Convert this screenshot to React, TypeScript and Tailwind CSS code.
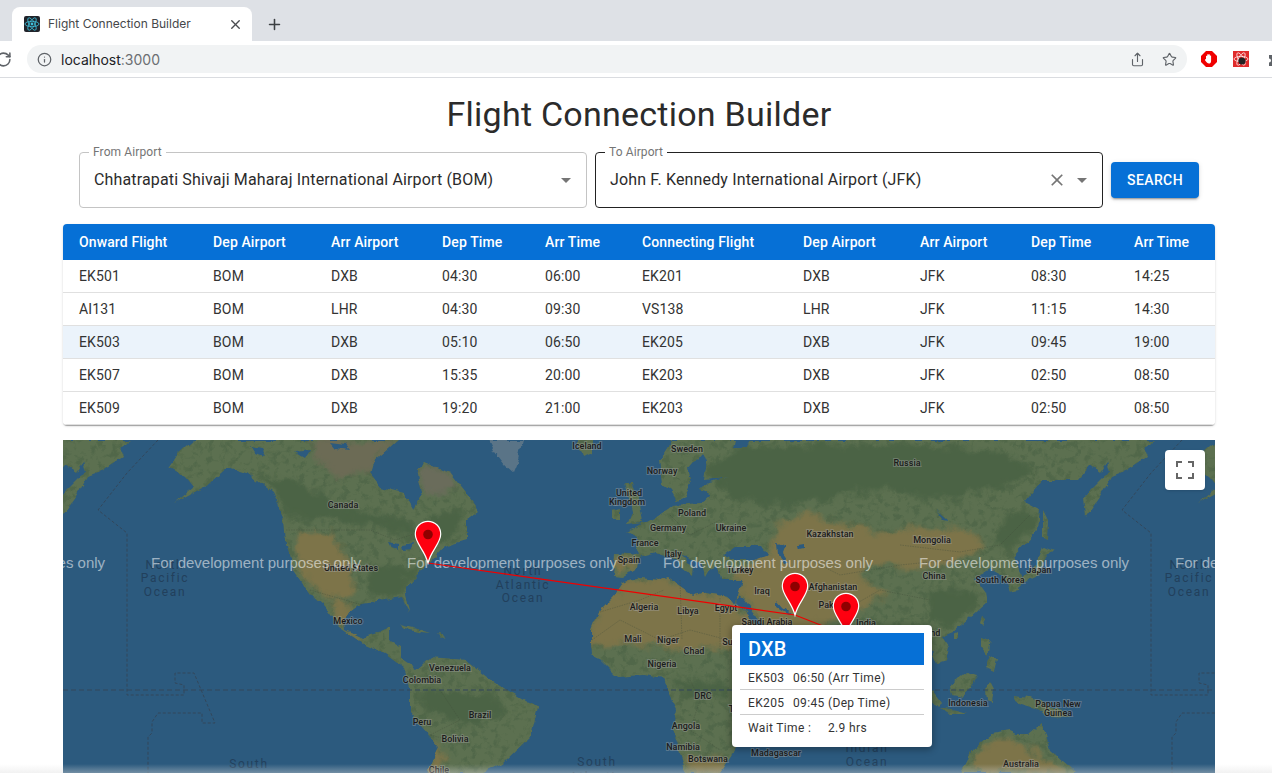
import React from "react";
import { RotateCw, Info, Share, Star, Plus, X } from "lucide-react";

const BLUE = "#0670d6";

const NA =
  "M169 467L179 453L194 440L397 440L374 460L370 473L381 487L404 493L414 510L422 497L416 470L424 462L450 473L466 493L479 510L466 520L466 540L443 547L429 563L404 590L410 613L402 597L385 600L362 603L343 617L345 630L362 638L378 633L389 628L389 640L401 647L401 660L416 670L431 657L466 660L496 683L538 707L531 737L504 763L481 773L427 773L439 747L410 713L410 687L404 667L385 653L362 643L339 627L324 607L309 593L293 570L286 543L284 520L272 493L247 473L228 467L205 487L175 503L194 487L186 477Z";

const EURASIA =
  "M673 440L660 460L663 483L672 490L678 500L685 497L691 483L688 470L703 452L707 462L704 480L730 477L708 482L700 490L710 494L700 503L673 505L667 510L647 522L640 525L627 533L637 538L640 555L615 553L613 577L623 578L635 570L640 557L655 553L670 557L692 575L693 568L680 555L700 563L705 577L710 568L717 565L720 580L742 580L738 597L737 603L727 597L700 592L693 595L667 577L660 580L640 578L623 583L613 597L600 610L592 630L592 643L593 653L617 677L643 675L663 678L667 690L677 710L673 733L683 763L687 773L720 773L732 755L745 735L900 700L932 650L937 663L947 660L950 647L943 637L953 633L987 603L985 592L975 578L990 568L1003 575L1010 592L1020 590L1022 575L1013 557L1038 530L1040 510L1025 502L1043 480L1077 480L1090 465L1100 472L1107 462L1110 473L1103 477L1083 497L1085 518L1100 497L1112 476L1127 470L1147 457L1143 447L1155 440Z";

const DESERT = [
  "M600 610L623 583L640 578L660 580L667 577L693 595L700 592L727 597L737 603L770 640L770 652L730 652L700 648L660 648L620 642L593 646L592 630Z",
  "M774 527L808 513L854 527L885 533L908 527L969 530L984 547L954 563L916 570L877 563L858 573L885 597L831 623L793 617L743 597L736 573L755 563L774 553Z",
  "M745 600L772 640L830 625L793 614L775 600L755 590Z",
  "M296 533L333 533L352 570L352 595L336 597L312 588L294 553Z",
  "M343 617L345 600L330 600L339 627Z",
  "M686 756L727 760L727 773L692 773Z",
  "M432 740L445 750L440 773L428 773Z",
  "M968 773L978 752L993 740L1010 740L1030 748L1048 758L1066 773Z",
  "M614 560L638 558L632 572L616 576Z",
];

const FOREST = [
  "M705 470L740 447L900 443L1000 452L1035 470L1000 488L940 500L880 488L820 500L770 505L730 497Z",
  "M255 473L300 483L350 510L408 520L418 538L380 528L330 518L288 518L273 492Z",
  "M420 693L488 690L508 713L462 727L420 707Z",
  "M670 680L724 682L727 695L686 698Z",
  "M928 592L976 592L980 603L950 628L928 624Z",
  "M370 566L420 568L402 588L395 598L370 598Z",
  "M428 512L462 512L460 534L440 544L428 538Z",
  "M1006 512L1035 514L1033 530L1010 550L994 546Z",
];

const LANDS = [
  "M625 483L633 483L640 505L643 523L627 525L633 510Z",
  "M612 510L620 508L620 518L612 518Z",
  "M578 440L592 440L592 452L584 456L578 452Z",
  "M400 624L417 628L432 633L422 632L405 628Z",
  "M436 634L446 636L440 638Z",
  "M1043 510L1048 520L1047 540L1043 538Z",
  "M1043 547L1052 551L1045 558L1040 575L1025 582L1012 592L1010 585L1025 575L1036 565Z",
  "M982 615L986 618L983 625L980 622Z",
  "M982 637L990 640L987 655L982 648Z",
  "M990 655L998 660L995 672L986 668Z",
  "M950 685L967 672L977 675L972 688L962 697L952 695Z",
  "M932 690L942 703L938 707L930 698Z",
  "M940 708L956 711L967 714L950 714Z",
  "M985 690L990 682L994 690L992 702L986 700Z",
  "M1013 695L1030 697L1050 705L1070 718L1050 717L1035 708L1018 703Z",
  "M954 634L958 632L958 638L954 638Z",
];

const AUSTRALIA = "M961 773L973 750L993 733L1010 730L1017 733L1030 733L1042 723L1050 750L1070 767L1076 773Z";

const WATERS = [
  "M723 555L735 546L762 546L768 555L755 560L735 560Z",
  "M777 542L785 545L782 553L788 562L783 565L778 555Z",
  "M777 600L783 607L793 615L787 613L777 607Z",
  "M738 597L743 600L772 638L769 640L739 605Z",
  "M798 545L804 544L804 548L799 549Z",
  "M736 440L750 440L745 448L734 448Z",
  "M936 511L941 515L948 521L943 520Z",
  "M389 542L398 544L398 551L392 548Z",
  "M402 545L414 543L412 549L403 550Z",
  "M330 442L345 444L350 450L335 448Z",
  "M295 452L310 450L305 458Z",
  "M250 447L262 449L266 456L254 453Z",
];

const BORDERS = [
  "M286 530L370 530L395 540L420 532L432 525",
  "M310 590L345 600L362 605",
  "M592 640L620 620L660 640L690 630L728 640",
  "M600 612L640 600L664 590",
  "M680 580L682 640M720 598L720 650",
  "M670 515L690 535L720 520L730 540",
  "M810 560L840 575L900 565L950 560",
  "M900 545L960 552L1000 545L1030 515",
  "M690 680L700 700L690 730L720 750",
  "M440 690L460 720L430 735L470 745",
  "M845 610L880 590L930 600",
];

const LABELS: [string, number, number][] = [
  ["Iceland", 587, 445], ["Sweden", 687, 448], ["Norway", 662, 470], ["Russia", 907, 462],
  ["United", 629, 492], ["Kingdom", 627, 501], ["Canada", 343, 504], ["Germany", 668, 527],
  ["Poland", 692, 512], ["Ukraine", 731, 527], ["Kazakhstan", 830, 533], ["Mongolia", 932, 539],
  ["France", 645, 542], ["Spain", 629, 559], ["Italy", 673, 553], ["Turkey", 740, 569],
  ["Iraq", 762, 590], ["Afghanistan", 833, 586], ["Pakistan", 836, 604], ["India", 866, 622],
  ["China", 934, 575], ["South Korea", 1000, 579], ["Japan", 1039, 569], ["United States", 351, 567],
  ["Mexico", 348, 620], ["Venezuela", 450, 667], ["Colombia", 422, 679], ["Brazil", 480, 714],
  ["Peru", 422, 721], ["Bolivia", 455, 738], ["Chile", 439, 769], ["Algeria", 644, 606],
  ["Libya", 688, 610], ["Egypt", 726, 607], ["Saudi Arabia", 767, 621], ["Mali", 633, 638],
  ["Niger", 668, 639], ["Chad", 694, 650], ["Sudan", 735, 641], ["Nigeria", 662, 663],
  ["DRC", 703, 695], ["Tanzania", 747, 708], ["Angola", 686, 725], ["Namibia", 683, 746],
  ["Botswana", 708, 758], ["Madagascar", 776, 752], ["Thailand", 923, 632], ["Indonesia", 968, 702],
  ["Papua New", 1058, 703], ["Guinea", 1058, 712], ["Australia", 1021, 763],
];

const OCEANS: [string, number, number][] = [
  ["North", 165, 565], ["Pacific", 165, 578], ["Ocean", 165, 592],
  ["North", 1189, 565], ["Pacific", 1189, 578], ["Ocean", 1189, 592],
  ["North", 523, 571], ["Atlantic", 523, 585], ["Ocean", 523, 598],
  ["South", 249, 764], ["Pacific", 249, 779], ["South", 597, 762], ["Atlantic", 597, 777],
  ["Indian", 867, 748], ["Ocean", 867, 762],
];

const HEAD = ["Onward Flight", "Dep Airport", "Arr Airport", "Dep Time", "Arr Time", "Connecting Flight", "Dep Airport", "Arr Airport", "Dep Time", "Arr Time"];
const ROWS = [
  ["EK501", "BOM", "DXB", "04:30", "06:00", "EK201", "DXB", "JFK", "08:30", "14:25"],
  ["AI131", "BOM", "LHR", "04:30", "09:30", "VS138", "LHR", "JFK", "11:15", "14:30"],
  ["EK503", "BOM", "DXB", "05:10", "06:50", "EK205", "DXB", "JFK", "09:45", "19:00"],
  ["EK507", "BOM", "DXB", "15:35", "20:00", "EK203", "DXB", "JFK", "02:50", "08:50"],
  ["EK509", "BOM", "DXB", "19:20", "21:00", "EK203", "DXB", "JFK", "02:50", "08:50"],
];

function Caret() {
  return (
    <svg width="24" height="24" viewBox="0 0 24 24" className="shrink-0 text-[#757575]" fill="currentColor">
      <path d="M7 10l5 5 5-5z" />
    </svg>
  );
}

function Field({ label, value, focused, clear }: { label: string; value: string; focused?: boolean; clear?: boolean }) {
  return (
    <div className={`relative flex h-14 w-[508px] items-center rounded border pl-[14px] pr-[8px] ${focused ? "border-[#222222]" : "border-[#c4c4c4]"}`}>
      <span className="absolute left-[9px] top-[-8px] bg-white px-[4px] text-[12px] leading-[15px] tracking-[0.1px] text-[#757575]">{label}</span>
      <span className="flex-1 truncate text-[16px] tracking-[0.15px] text-[#2b2b2b]">{value}</span>
      {clear && (
        <svg width="20" height="20" viewBox="0 0 24 24" fill="#757575" className="mr-[3px] shrink-0">
          <path d="M19 6.41L17.59 5 12 10.59 6.41 5 5 6.41 10.59 12 5 17.59 6.41 19 12 13.41 17.59 19 19 17.59 13.41 12z" />
        </svg>
      )}
      <Caret />
    </div>
  );
}

function Pin({ x, y }: { x: number; y: number }) {
  return (
    <g transform={`translate(${x - 13.5} ${y - 42.5})`}>
      <path d="M13.5 .8C6.2.8.8 6.4.8 13.6C.8 23 10 29 13.5 42.5C17 29 26.2 23 26.2 13.6C26.2 6.4 20.8.8 13.5.8Z" fill="#fe0010" stroke="#ffffff" strokeWidth="1.2" />
      <circle cx="13.5" cy="14" r="4.8" fill="#8f0000" />
    </g>
  );
}

function WorldMap() {
  return (
    <svg viewBox="63 440 1152 333" width="1152" height="333" className="block">
      <defs>
        <filter id="rough" x="-5%" y="-5%" width="110%" height="110%" colorInterpolationFilters="sRGB">
          <feTurbulence type="fractalNoise" baseFrequency=".085" numOctaves="3" seed="4" result="n" />
          <feDisplacementMap in="SourceGraphic" in2="n" scale="7" xChannelSelector="R" yChannelSelector="G" />
          <feGaussianBlur stdDeviation=".35" />
        </filter>
        <filter id="biome" x="-10%" y="-10%" width="120%" height="120%" colorInterpolationFilters="sRGB">
          <feGaussianBlur stdDeviation="2.5" result="b" />
          <feTurbulence type="fractalNoise" baseFrequency=".06" numOctaves="3" seed="9" result="n" />
          <feDisplacementMap in="b" in2="n" scale="16" xChannelSelector="R" yChannelSelector="G" />
        </filter>
        <filter id="mottle" x="0" y="0" width="100%" height="100%" colorInterpolationFilters="sRGB">
          <feTurbulence type="fractalNoise" baseFrequency=".14" numOctaves="3" seed="2" />
          <feColorMatrix type="matrix" values="0 0 0 0 .27  0 0 0 0 .37  0 0 0 0 .26  5 0 0 0 -2.5" />
        </filter>
        <clipPath id="land">
          <path d={NA} />
          <path d={EURASIA} />
          <path d={AUSTRALIA} />
          {LANDS.map((d, i) => <path key={i} d={d} />)}
        </clipPath>
      </defs>
      <rect x="63" y="440" width="1152" height="333" fill="#2c5a7e" />
      <g id="world">
        <g filter="url(#rough)">
          <path d="M489 440L523 440L518 460L513 472L505 465L495 452Z" fill="#5a7487" />
          <g clipPath="url(#land)">
            <rect x="60" y="440" width="1160" height="333" fill="#5c7050" />
            <rect x="60" y="440" width="1160" height="333" filter="url(#mottle)" opacity=".45" />
            <g filter="url(#biome)">
              <path d="M310 440L397 440L374 460L370 473L340 478L320 465Z" fill="#6c6b55" />
              <path d="M416 476L424 462L450 473L460 490L430 495Z" fill="#6a6c5b" />
              {FOREST.map((d, i) => <path key={i} d={d} fill="#4b6345" />)}
              {DESERT.map((d, i) => <path key={i} d={d} fill="#7d7449" />)}
              <path d="M345 600L340 628L362 638L352 610Z" fill="#7d7449" />
            </g>
          </g>
          {WATERS.map((d, i) => <path key={i} d={d} fill="#2c5a7e" />)}
        </g>
        {BORDERS.map((d, i) => <path key={i} d={d} fill="none" stroke="#3f4a3a" strokeWidth=".5" strokeDasharray="1.5 1" opacity=".7" />)}
        <path d="M158 440L127 473L98 510L127 533L127 695L184 695L184 685L175 683L175 673L194 673L215 723L202 723L202 713L158 713L152 722L152 733L148 737L148 773" fill="none" stroke="#33475b" strokeWidth="1" strokeDasharray="3 2" />
      </g>
      <use href="#world" x="1024" />
      <use href="#world" x="-1024" />
      <path d="M63 690H1215" stroke="#33475b" strokeWidth="1" strokeDasharray="5 3" />
      <g fontFamily="Roboto, sans-serif" fontSize="12" letterSpacing="1.7" fill="#22405c" textAnchor="middle">
        {OCEANS.map(([t, x, y], i) => <text key={i} x={x} y={y + 4}>{t}</text>)}
      </g>
      <g fontFamily="Roboto, sans-serif" fontSize="9" fontWeight="500" fill="#1c1c1c" textAnchor="middle" stroke="#a8a8a8" strokeOpacity=".4" strokeWidth="2" paintOrder="stroke">
        {LABELS.map(([t, x, y], i) => <text key={i} x={x} y={y + 3.5}>{t}</text>)}
      </g>
      <g fontFamily="'Liberation Sans', sans-serif" fontSize="15" fill="#ffffff" fillOpacity=".55">
        {[-105, 151, 407, 663, 919, 1175].map((x) => <text key={x} x={x} y={567.5}>For development purposes only</text>)}
      </g>
      <path d="M428 563L795 615L846 635" fill="none" stroke="#f00000" strokeWidth="1.2" />
      <Pin x={428} y={563} />
      <Pin x={795} y={615} />
      <Pin x={846} y={635} />
    </svg>
  );
}

function ReactFavicon() {
  return (
    <svg width="16" height="16" viewBox="0 0 16 16" className="shrink-0">
      <rect width="16" height="16" rx="2" fill="#20232a" />
      <g fill="none" stroke="#3fc1dc" strokeWidth=".8">
        <ellipse cx="8" cy="8" rx="7" ry="2.7" />
        <ellipse cx="8" cy="8" rx="7" ry="2.7" transform="rotate(60 8 8)" />
        <ellipse cx="8" cy="8" rx="7" ry="2.7" transform="rotate(120 8 8)" />
      </g>
      <circle cx="8" cy="8" r="1.4" fill="#3fc1dc" />
    </svg>
  );
}

function Chrome() {
  return (
    <div style={{ fontFamily: "Inter, sans-serif" }}>
      <div className="flex h-[41px] items-end bg-[#dee1e6] pl-[12px]">
        <div className="flex h-[34px] w-[240px] items-center rounded-t-lg bg-white pl-[12px] pr-[9px]">
          <ReactFavicon />
          <span className="ml-[8px] flex-1 truncate text-[12px] text-[#45474a]">Flight Connection Builder</span>
          <X size={15} strokeWidth={2.2} className="text-[#4a4c50]" />
        </div>
        <div className="flex h-[34px] w-[44px] items-center justify-center">
          <Plus size={17} strokeWidth={2.2} className="text-[#3c4043]" />
        </div>
      </div>
      <div className="relative flex h-[37px] items-center overflow-hidden border-b border-[#dadce0] bg-white">
        <RotateCw size={17} strokeWidth={2.2} className="absolute left-[-5px] top-[10px] text-[#5f6368]" />
        <div className="ml-[27px] flex h-[28px] w-[1160px] shrink-0 items-center rounded-full bg-[#f1f3f4] pl-[10px] pr-[10px]">
          <Info size={15} strokeWidth={2} className="text-[#5f6368]" />
          <span className="ml-[9px] flex-1 text-[14px] text-[#202124]">localhost<span className="text-[#6b6e72]">:3000</span></span>
          <Share size={15} strokeWidth={1.8} className="text-[#5f6368]" />
          <Star size={15} strokeWidth={1.8} className="ml-[17px] text-[#5f6368]" />
        </div>
        <svg width="16" height="16" viewBox="0 0 16 16" className="ml-[14px] shrink-0">
          <path d="M5 0H11L16 5V11L11 16H5L0 11V5Z" fill="#f00000" />
          <path d="M5 8V5a1 1 0 0 1 1.2 0V3.6a1 1 0 0 1 1.3 0a1 1 0 0 1 1.3 0V4.6a1 1 0 0 1 1.3 .2V9.5C10.2 12 9 12.5 8 12.5C6.5 12.5 5.8 11.5 4 9.2C4 8.5 4.5 8 5 8Z" fill="#ffffff" />
        </svg>
        <svg width="16" height="16" viewBox="0 0 16 16" className="ml-[16px] shrink-0">
          <rect width="16" height="16" fill="#e02b2b" />
          <g fill="none" stroke="#ffffff" strokeWidth=".7">
            <ellipse cx="8" cy="8" rx="7" ry="2.6" />
            <ellipse cx="8" cy="8" rx="7" ry="2.6" transform="rotate(60 8 8)" />
            <ellipse cx="8" cy="8" rx="7" ry="2.6" transform="rotate(120 8 8)" />
          </g>
          <circle cx="9" cy="10" r="3.6" fill="#222222" />
        </svg>
        <svg width="16" height="16" viewBox="0 0 16 16" className="ml-[18px] shrink-0">
          <path d="M2 4H5.5A2 2 0 0 1 9.5 4H13V7.5A2 2 0 0 1 13 11.5V15H2V11.5A2 2 0 0 0 2 7.5Z" fill="#5f6368" />
        </svg>
      </div>
    </div>
  );
}

export default function App() {
  return (
    <div className="relative h-[773px] w-[1272px] overflow-hidden bg-white text-[#2b2b2b]" style={{ fontFamily: "Roboto, sans-serif" }}>
      <Chrome />
      <h1 className="mt-[15px] pl-[6px] text-center text-[34px] font-normal leading-[42px] tracking-[0.25px] text-[#2b2b2b]">Flight Connection Builder</h1>
      <div className="ml-[79px] mt-[17px] flex items-center gap-2">
        <Field label="From Airport" value="Chhatrapati Shivaji Maharaj International Airport (BOM)" />
        <Field label="To Airport" value="John F. Kennedy International Airport (JFK)" focused clear />
        <button className="flex h-9 w-[88px] items-center justify-center rounded bg-[#0670d6] text-[14px] font-medium tracking-[0.4px] text-white shadow-[0_3px_1px_-2px_rgba(0,0,0,.2),0_2px_2px_0_rgba(0,0,0,.14),0_1px_5px_0_rgba(0,0,0,.12)]">SEARCH</button>
      </div>
      <div className="ml-[63px] mt-4 w-[1152px] overflow-hidden rounded bg-white shadow-[0_2px_1px_-1px_rgba(0,0,0,.2),0_1px_1px_0_rgba(0,0,0,.14),0_1px_3px_0_rgba(0,0,0,.12)]">
        <div className="grid h-9 grid-cols-[134px_118px_111px_103px_97px_161px_117px_111px_103px_97px] items-center bg-[#0670d6] text-[14px] font-medium tracking-[0.12px] text-white">
          {HEAD.map((h, i) => <div key={i} className="pl-4">{h}</div>)}
        </div>
        {ROWS.map((r, i) => (
          <div key={i} className={`grid h-[33px] grid-cols-[134px_118px_111px_103px_97px_161px_117px_111px_103px_97px] items-center border-b border-[#e0e0e0] text-[14px] tracking-[0.15px] text-[#333333] ${i === 2 ? "bg-[#ebf3fb]" : "bg-white"}`}>
            {r.map((c, j) => <div key={j} className="pl-4">{c}</div>)}
          </div>
        ))}
      </div>
      <div className="relative ml-[63px] mt-[15px] h-[333px] w-[1152px] overflow-hidden">
        <WorldMap />
        <div className="absolute left-[1102px] top-[10px] flex h-10 w-10 items-center justify-center rounded-sm bg-white shadow-sm">
          <svg width="18" height="18" viewBox="0 0 18 18" fill="none" stroke="#666666" strokeWidth="2">
            <path d="M1 6V1H6M12 1H17V6M17 12V17H12M6 17H1V12" />
          </svg>
        </div>
        <div className="absolute left-[669px] top-[185px] w-[200px] rounded-[4px] bg-white p-2 text-[#333333] shadow-[0_2px_7px_1px_rgba(0,0,0,.3)]">
          <div className="flex h-8 items-center pl-2 text-[20px] font-medium leading-none tracking-[0.2px] text-white" style={{ backgroundColor: BLUE }}>DXB</div>
          <div className="flex h-[25px] items-center border-b border-[#cccccc] pl-2 pt-[2px] text-[12px] tracking-[0.35px]">
            <span className="w-[45px]">EK503</span><span>06:50 (Arr Time)</span>
          </div>
          <div className="flex h-[25px] items-center border-b border-[#cccccc] pl-2 pt-[2px] text-[12px] tracking-[0.35px]">
            <span className="w-[45px]">EK205</span><span>09:45 (Dep Time)</span>
          </div>
          <div className="flex h-[24px] items-center pl-2 pt-[2px] text-[12px] tracking-[0.35px]">
            <span className="w-[80px]">Wait Time :</span><span>2.9 hrs</span>
          </div>
        </div>
      </div>
      <div className="absolute inset-x-0 bottom-0 h-[9px] bg-gradient-to-t from-[#dddddd]/40 to-transparent" />
    </div>
  );
}
